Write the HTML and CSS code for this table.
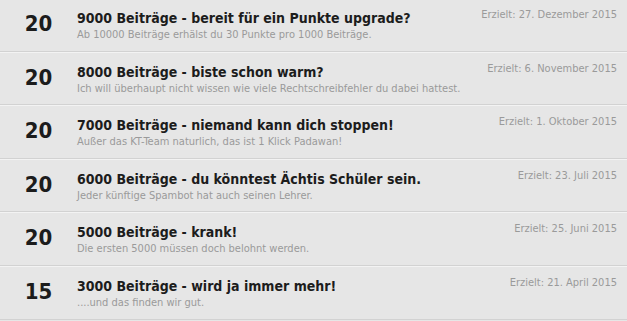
FILE: index.html
```html
<!DOCTYPE html>
<html lang="de">
<head>
    <meta charset="UTF-8">
    <title>Erfolge</title>
    <link rel="stylesheet" href="styles.css">
</head>
<body>
    <ul class="award-list">
        <li class="award">
            <div class="award-points">20</div>
            <div class="award-info">
                <div class="award-title">9000 Beiträge - bereit für ein Punkte upgrade?</div>
                <div class="award-desc">Ab 10000 Beiträge erhälst du 30 Punkte pro 1000 Beiträge.</div>
            </div>
            <div class="award-date">Erzielt: 27. Dezember 2015</div>
        </li>
        <li class="award">
            <div class="award-points">20</div>
            <div class="award-info">
                <div class="award-title">8000 Beiträge - biste schon warm?</div>
                <div class="award-desc">Ich will überhaupt nicht wissen wie viele Rechtschreibfehler du dabei hattest.</div>
            </div>
            <div class="award-date">Erzielt: 6. November 2015</div>
        </li>
        <li class="award">
            <div class="award-points">20</div>
            <div class="award-info">
                <div class="award-title">7000 Beiträge - niemand kann dich stoppen!</div>
                <div class="award-desc">Außer das KT-Team naturlich, das ist 1 Klick Padawan!</div>
            </div>
            <div class="award-date">Erzielt: 1. Oktober 2015</div>
        </li>
        <li class="award">
            <div class="award-points">20</div>
            <div class="award-info">
                <div class="award-title">6000 Beiträge - du könntest Ächtis Schüler sein.</div>
                <div class="award-desc">Jeder künftige Spambot hat auch seinen Lehrer.</div>
            </div>
            <div class="award-date">Erzielt: 23. Juli 2015</div>
        </li>
        <li class="award">
            <div class="award-points">20</div>
            <div class="award-info">
                <div class="award-title">5000 Beiträge - krank!</div>
                <div class="award-desc">Die ersten 5000 müssen doch belohnt werden.</div>
            </div>
            <div class="award-date">Erzielt: 25. Juni 2015</div>
        </li>
        <li class="award">
            <div class="award-points">15</div>
            <div class="award-info">
                <div class="award-title">3000 Beiträge - wird ja immer mehr!</div>
                <div class="award-desc">....und das finden wir gut.</div>
            </div>
            <div class="award-date">Erzielt: 21. April 2015</div>
        </li>
    </ul>
</body>
</html>
```

FILE: styles.css
```css
* {
    box-sizing: border-box;
    margin: 0;
    padding: 0;
}

body {
    background: #e6e6e6;
    font-family: "DejaVu Sans Condensed", "DejaVu Sans", sans-serif;
    font-stretch: condensed;
    overflow: hidden;
}

.award-list {
    list-style: none;
    margin-top: -2px;
}

.award {
    display: flex;
    align-items: flex-start;
    height: 53.6px;
    border-bottom: 1px solid #d2d2d2;
    box-shadow: 0 1px 0 #f3f3f3;
}

.award-points {
    width: 77px;
    flex-shrink: 0;
    text-align: center;
    font-size: 22px;
    font-weight: bold;
    color: #1c1c1c;
    padding-top: 13px;
}

.award-info {
    flex: 1;
    padding-top: 10px;
    white-space: nowrap;
}

.award-title {
    font-size: 14px;
    font-weight: bold;
    color: #1c1c1c;
    line-height: 20px;
}

.award-desc {
    font-size: 11px;
    color: #9a9a9a;
    line-height: 14px;
}

.award-date {
    font-size: 11px;
    color: #9a9a9a;
    padding-top: 10px;
    padding-right: 10px;
    white-space: nowrap;
}
```
